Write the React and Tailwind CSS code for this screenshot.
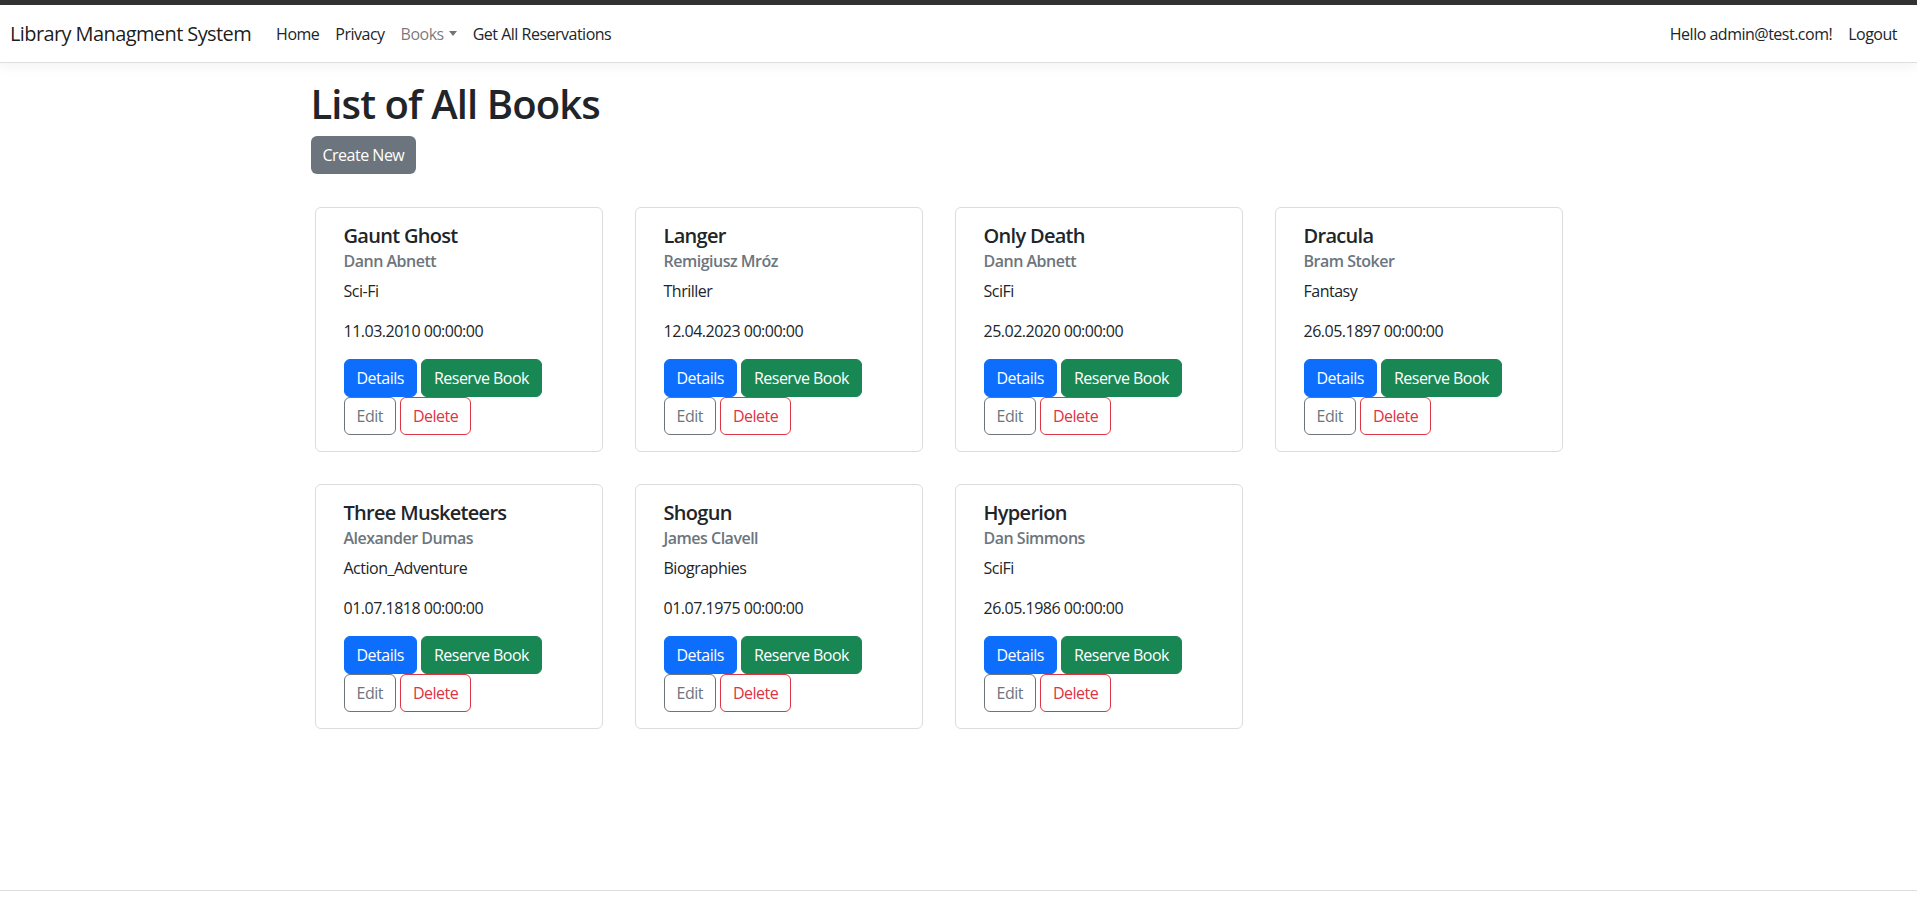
const books = [
  { title: "Gaunt Ghost", author: "Dann Abnett", genre: "Sci-Fi", date: "11.03.2010 00:00:00" },
  { title: "Langer", author: "Remigiusz Mróz", genre: "Thriller", date: "12.04.2023 00:00:00" },
  { title: "Only Death", author: "Dann Abnett", genre: "SciFi", date: "25.02.2020 00:00:00" },
  { title: "Dracula", author: "Bram Stoker", genre: "Fantasy", date: "26.05.1897 00:00:00" },
  { title: "Three Musketeers", author: "Alexander Dumas", genre: "Action_Adventure", date: "01.07.1818 00:00:00" },
  { title: "Shogun", author: "James Clavell", genre: "Biographies", date: "01.07.1975 00:00:00" },
  { title: "Hyperion", author: "Dan Simmons", genre: "SciFi", date: "26.05.1986 00:00:00" },
];

function Card({ b }) {
  return (
    <div className="w-[288px] border border-[#dcdcdc] rounded-[6px] pt-4 pb-4 pl-[28px] pr-4 bg-white">
      <div className="text-[20px] leading-[24px] font-semibold text-[#212529] mb-2 tracking-[-0.7px]">{b.title}</div>
      <div className="text-[16px] leading-[19px] font-semibold text-[#6c757d] -mt-1 mb-2">{b.author}</div>
      <p className="leading-6 mb-4">{b.genre}</p>
      <p className="leading-6 mb-4">{b.date}</p>
      <div className="flex gap-1">
        <button className="h-[38px] px-3 rounded-[6px] bg-[#0d6efd] text-white border border-[#0d6efd] leading-6">Details</button>
        <button className="h-[38px] px-3 rounded-[6px] bg-[#198754] text-white border border-[#198754] leading-6">Reserve Book</button>
      </div>
      <div className="flex gap-1">
        <button className="h-[38px] px-3 rounded-[6px] bg-white text-[#6c757d] border border-[#6c757d] leading-6">Edit</button>
        <button className="h-[38px] px-3 rounded-[6px] bg-white text-[#dc3545] border border-[#dc3545] leading-6">Delete</button>
      </div>
    </div>
  );
}

export default function App() {
  return (
    <div
      className="min-h-[899px] flex flex-col bg-white text-[#212529] text-[16px] leading-6 tracking-[-0.5px]"
      style={{ fontFamily: '"Open Sans", "Noto Sans", "Liberation Sans", sans-serif' }}
    >
      <div className="h-[5px] bg-[#333333]" />
      <nav className="h-[58px] flex items-center justify-between pl-[10px] pr-[12px] border-b border-[#dedede] shadow-[0_4px_12px_rgba(0,0,0,0.05)] bg-white">
        <div className="flex items-center">
          <span className="text-[20px] leading-[30px] text-[rgba(0,0,0,0.9)] mr-[17px] tracking-[-0.6px]">Library Managment System</span>
          <a className="px-2 text-[#212529]">Home</a>
          <a className="px-2 text-[#212529]">Privacy</a>
          <a className="px-2 text-[rgba(0,0,0,0.55)] flex items-center">
            Books
            <span className="ml-[5px] inline-block w-0 h-0 border-l-[4px] border-r-[4px] border-t-[5px] border-l-transparent border-r-transparent border-t-[rgba(0,0,0,0.55)]" />
          </a>
          <a className="px-2 text-[#212529]">Get All Reservations</a>
        </div>
        <div className="flex items-center">
          <span className="px-2 text-[#212529]">Hello admin@test.com!</span>
          <a className="px-2 text-[#212529]">Logout</a>
        </div>
      </nav>

      <main className="w-[1320px] mx-auto px-3 pt-[17px]">
        <h1 className="text-[40px] leading-[48px] font-semibold mb-2 tracking-[-0.9px]">List of All Books</h1>
        <button className="h-[38px] px-3 rounded-[6px] bg-[#6c757d] text-white leading-6">Create New</button>
        <div className="mt-[33px] ml-[4px] flex flex-wrap gap-x-[32px] gap-y-[32px] w-[1260px]">
          {books.map((b) => (
            <Card key={b.title} b={b} />
          ))}
        </div>
      </main>

      <div className="flex-1" />
      <footer className="h-[9px] border-t border-[#dedede]" />
    </div>
  );
}
